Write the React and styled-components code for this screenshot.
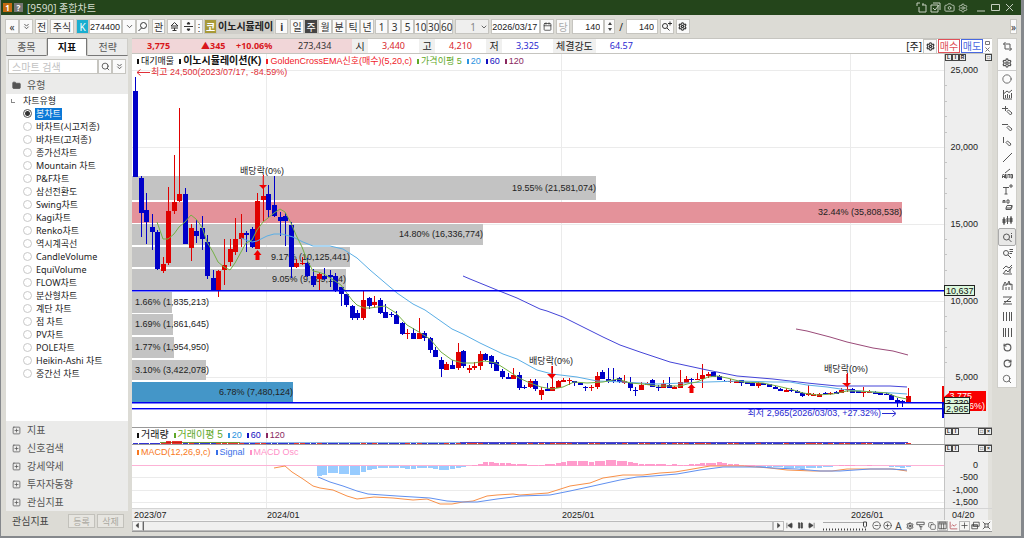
import { useState } from 'react';
import styled, { createGlobalStyle, css } from 'styled-components';
import {
  Settings, Search, Camera, ChevronDown, ChevronsDown, Calendar, Plus, RotateCcw, RotateCw,
  Repeat, Circle, CirclePlus, CircleMinus, FolderMinus, SquarePlus, Pause, SkipBack, SkipForward,
  Copy, ChartLine,
} from 'lucide-react';

const UI_FONT = "'Noto Sans', 'Noto Sans CJK KR', sans-serif";
const CHART_FONT = "'Liberation Sans', 'Noto Sans CJK KR', sans-serif";

const UP = '#e00000';
const DOWN = '#0000c8';

/* ---------- data ---------- */

// color, high, body top, body bottom, low
const CANDLES = [
  'd 77 91 177 177', 'd 176 178 213 237', 'd 193 210 222 244', 'd 214 227 232 250', 'd 230 232 269 270',
  'u 257 264 271 273', 'u 187 211 263 265', 'u 155 202 211 214', 'u 108 194 201 202', 'd 188 194 244 244',
  'u 224 228 248 261', 'd 220 231 236 243', 'd 216 228 239 250', 'd 235 242 276 279', 'd 270 278 290 291',
  'u 270 271 290 297', 'u 239 265 270 285', 'u 239 249 262 266', 'u 218 239 252 255', 'u 214 233 239 247',
  'd 231 233 235 252', 'd 227 229 247 248', 'u 193 201 249 249', 'u 175 196 200 221', 'd 185 194 210 218',
  'd 176 205 216 217', 'd 212 217 221 236', 'd 213 216 221 246', 'd 222 225 267 278', 'u 259 263 267 268',
  'u 257 263 264 265', 'd 258 263 276 277', 'd 269 276 285 287', 'u 272 274 279 290', 'd 268 276 279 280',
  'd 270 275 277 287', 'd 273 276 290 292', 'd 287 287 294 306', 'd 294 294 305 307', 'd 305 306 318 320',
  'd 310 313 318 320', 'u 290 300 318 320', 'd 297 298 306 309', 'u 296 302 305 308', 'd 298 300 313 314',
  'd 304 312 318 318', 'd 312 314 315 317', 'd 311 315 324 324', 'd 322 323 334 335', 'u 329 333 334 339',
  'd 328 333 339 339', 'u 318 333 339 339', 'd 331 333 338 341', 'd 337 338 350 353', 'd 347 350 357 357',
  'd 357 360 369 377', 'u 362 364 370 370', 'd 360 365 369 369', 'u 343 352 368 370', 'd 350 351 366 368',
  'u 365 368 370 373', 'u 362 366 368 370', 'u 351 354 366 370', 'd 353 354 360 361', 'd 355 356 364 368',
  'd 360 362 371 371', 'd 369 371 377 379', 'd 373 377 379 379', 'u 368 375 379 379', 'd 372 375 388 390',
  'd 385 387 388 389', 'u 379 381 387 388', 'd 379 381 389 391', 'u 387 390 395 400', 'd 383 389 391 391',
  'u 366 387 391 391', 'u 380 381 388 388', 'u 378 380 382 382', 'u 378 380 381 385', 'd 381 381 383 386',
  'd 382 383 385 385', 'd 386 387 388 391', 'u 385 387 388 391', 'u 372 376 387 389', 'd 370 372 379 379',
  'd 368 379 381 383', 'd 368 380 381 383', 'd 377 378 382 383', 'u 375 381 383 384', 'd 377 382 388 391',
  'd 387 390 391 396', 'u 382 385 390 390', 'u 382 383 385 385', 'd 379 380 387 387', 'd 385 387 388 391',
  'u 380 384 388 388', 'd 377 385 388 388', 'u 386 387 389 389', 'u 370 382 388 388', 'u 376 379 383 383',
  'd 378 379 380 385', 'u 373 379 380 380', 'u 364 375 379 388', 'u 372 374 376 378', 'd 372 372 377 377',
  'd 375 376 380 380', 'd 380 381 382 382', 'u 379 381 382 383', 'u 380 381 383 383', 'd 380 380 383 386',
  'd 382 382 384 384', 'd 382 383 386 386', 'u 382 383 386 388', 'd 383 383 385 385', 'd 384 384 387 387',
  'd 386 387 389 389', 'd 388 389 391 391', 'u 388 390 392 392', 'd 388 390 391 392', 'd 390 391 393 393',
  'd 392 393 396 397', 'u 385 393 395 396', 'u 393 394 396 396', 'u 393 394 397 397', 'd 392 393 394 394',
  'u 392 393 394 395', 'd 391 392 394 394', 'u 388 390 393 393', 'u 373 389 390 392', 'd 388 389 393 393',
  'd 391 391 393 393', 'u 387 392 393 397', 'u 390 392 393 393', 'd 391 392 394 394', 'd 393 393 395 395',
  'd 393 394 395 395', 'd 394 395 400 400', 'd 398 400 403 407', 'd 400 401 403 407', 'u 388 396 402 402',
].map((row) => {
  const [kind, high, top, bottom, low] = row.split(' ');
  return { color: kind === 'u' ? UP : DOWN, high: +high, top: +top, bottom: +bottom, low: +low };
});

const MA5 = '157,222 163,239 168,239 174,234 179,227 185,222 191,215 196,219 202,227 207,242 213,252 218,262 224,267 230,270 235,263 241,252 246,243 252,240 257,230 263,222 268,218 274,213 280,209 285,212 291,223 296,235 302,247 307,260 313,271 318,272 324,274 330,278 335,281 341,285 346,292 352,300 357,305 364,308 370,308 385,306 396,313 407,325 419,332 430,339 441,352 452,360 463,363 474,363 485,361 496,363 507,370 519,378 530,383 541,387 552,389 563,387 574,382 587,383 603,382 618,379 630,383 643,384 657,386 680,386 691,383 697,382 708,377 717,376 727,378 743,382 763,383 777,386 790,389 803,393 817,395 833,394 847,391 860,391 873,392 887,393 897,397 907,399';
const MA20 = '241,238 246,240 252,242 257,241 267,236 274,234 282,234 293,237 303,242 313,246 330,246 343,249 357,258 370,270 397,293 413,304 425,310 452,329 463,334 480,343 503,354 517,359 537,370 552,374 577,377 597,381 623,382 657,384 683,383 707,382 740,381 773,382 790,382 807,385 827,387 847,390 873,392 893,393 907,394';
const MA60 = '463,276 470,279 497,290 517,298 540,309 547,311 563,317 583,327 603,337 620,345 640,352 670,362 707,370 737,376 773,379 807,383 837,386 863,386 890,386 907,387';
const MA120 = '796,329 807,331 830,337 847,342 873,348 893,351 908,355';

const MACD = '274,468 285,466 292,472 303,479 313,486 320,488 333,490 347,496 357,499 374,497 393,498 413,500 427,499 440,504 452,504 463,502 473,501 487,496 497,495 513,494 520,495 548,493 570,486 590,483 603,478 623,475 643,475 660,473 675,472 687,470 710,466 743,466 770,468 787,470 813,471 832,471 847,469 877,469 893,469 907,471';
const SIGNAL = '318,477 330,482 343,486 357,491 368,494 397,496 430,498 447,501 463,502 477,502 497,499 513,497 520,496 550,495 570,491 593,486 620,480 637,477 653,476 677,474 700,470 723,467 760,467 773,468 797,469 820,471 840,471 870,469 890,469 907,470';

// oscillator bars from the 34th week on, in pixels over (+) or under (-) zero
const OSC = [
  -10, -9, -7, -7, -8, -8, -9, -9, -6, -4, -3, -2, -2, -2, -2, -2, -3, -3, -2, -2, -2, -3, -4, -4, -3, -2, -1, 0,
  1, 2, 4, 4, 3, 3, 3, 2, 2, 2, 1, 1, 1, 2, 2, 3, 4, 5, 5, 5, 5, 4, 5, 5, 6, 6, 5, 5, 4, 3, 2, 2, 2, 2, 2, 1, 2, 1,
  1, 2, 2, 3, 3, 3, 4, 3, 2, 2, 1, 1, 1, -1, -1, -1, -1, -1, -2, -2, -2, -3, -2, -2, -2, -1, -1, 0,
  1, 1, 1, 0, 0, 1, 0, 0, 0, -1, -1, -2, -1,
];

const PROFILE = [
  { end: 596, top: 176, height: 24, label: '19.55% (21,581,074)' },
  { end: 902, top: 202, height: 21, label: '32.44% (35,808,538)', color: '#e4929a' },
  { end: 483, top: 224, height: 21, label: '14.80% (16,336,774)' },
  { end: 350, top: 247, height: 20, label: '9.17% (10,125,441)' },
  { end: 346, top: 269, height: 21, label: '9.05% (9,989,104)' },
  { end: 172, top: 292, height: 21, label: '1.66% (1,835,213)' },
  { end: 173, top: 314, height: 21, label: '1.69% (1,861,645)' },
  { end: 174, top: 337, height: 21, label: '1.77% (1,954,950)' },
  { end: 206, top: 360, height: 20, label: '3.10% (3,422,078)' },
  { end: 293, top: 382, height: 20, label: '6.78% (7,480,124)', color: '#4496c8' },
];

const CHART_TYPES = [
  '봉차트', '바차트(시고저종)', '바차트(고저종)', '종가선차트', 'Mountain 차트', 'P&F차트', '삼선전환도',
  'Swing차트', 'Kagi차트', 'Renko차트', '역시계곡선', 'CandleVolume', 'EquiVolume', 'FLOW차트', '분산형차트',
  '계단 차트', '점 차트', 'PV차트', 'POLE차트', 'Heikin-Ashi 차트', '중간선 차트',
];
const GROUPS = ['지표', '신호검색', '강세약세', '투자자동향', '관심지표'];
const YEARS = [266, 561, 850];

const candleX = (i) => Math.round(135 + i * 5.561);

/* ---------- styles ---------- */

const GlobalStyle = createGlobalStyle`
  * { box-sizing: border-box; }
  body { margin: 0; background: #c9c8c2; }
  button, input, select { font: inherit; color: inherit; margin: 0; }
`;

const Window = styled.div`
  display: flex;
  flex-direction: column;
  min-height: 100vh;
  border: solid #85888c;
  border-width: 0 3px 2px 1px;
  background: #dcdbd5;
  font: 10px/12px ${UI_FONT};
  color: #222;
`;

const TitleBar = styled.header`
  display: flex;
  align-items: center;
  gap: 2px;
  height: 15px;
  padding: 0 6px 0 2px;
  background: #24451b;
  color: #d3dcce;
`;

const TitleBadge = styled.span`
  width: 9px;
  height: 9px;
  background: ${({ $bg }) => $bg};
  color: #fff;
  font-size: 8px;
  font-weight: 700;
  line-height: 9px;
  text-align: center;
`;

const Title = styled.h1`
  flex: 1;
  margin: 0 0 0 2px;
  font: 10px/14px ${UI_FONT};
`;

const TitleButton = styled.button`
  display: flex;
  padding: 0;
  border: 0;
  margin-left: ${({ $gap }) => ($gap ? '6px' : '1px')};
  background: none;
  color: #c5cfc0;
`;

const Toolbar = styled.div`
  display: flex;
  align-items: center;
  height: 23px;
  padding: 0 4px;
`;

const ToolGroup = styled.div`
  display: flex;
  margin-right: ${({ $gap = 2 }) => $gap}px;
  ${({ $end }) => $end && css`
    margin-left: auto;
    margin-right: 0;
  `}
`;

const ToolButton = styled.button`
  display: flex;
  align-items: center;
  justify-content: center;
  width: ${({ $w = 14 }) => $w}px;
  height: 15px;
  padding: 0;
  border: 1px solid #c6c5c0;
  background: ${({ $bg }) => $bg || '#fafafa'};
  color: ${({ $fg }) => $fg || '#333'};
  font-weight: ${({ $bold }) => ($bold ? 700 : 400)};
  line-height: 12px;
  white-space: nowrap;
  & + & { border-left-width: ${({ $joined }) => ($joined ? 0 : 1)}px; }
`;

const ToolInput = styled.input`
  width: ${({ $w }) => $w}px;
  height: 15px;
  padding: ${({ $right }) => ($right ? '0 3px' : '0')};
  border: 1px solid #c6c5c0;
  background: #fff;
  font: 9px ${CHART_FONT};
  text-align: ${({ $right }) => ($right ? 'right' : 'left')};
`;

const UnitSelect = styled.select`
  width: 34px;
  height: 15px;
  padding: 0 0 0 14px;
  border: 1px solid #c6c5c0;
  background: #efefee;
  color: #888;
  appearance: none;
`;

const SelectWrap = styled.div`
  position: relative;
  margin-right: 2px;
  svg {
    position: absolute;
    right: 1px;
    top: 4px;
    pointer-events: none;
  }
`;

const StockName = styled.strong`
  min-width: 56px;
  height: 15px;
  padding: 0 1px;
  background: #cfcec9;
  font: 700 10px/15px ${UI_FONT};
  white-space: nowrap;
`;

const Spinner = styled.span`
  display: flex;
  flex-direction: column;
  justify-content: center;
  gap: 3px;
  align-items: center;
  width: 11px;
  height: 15px;
  border: 1px solid #c6c5c0;
  background: #fafafa;
`;

const Arrow = styled.i`
  border: 2px solid transparent;
  ${({ $up }) => ($up
    ? css`border-top-width: 0; border-bottom: 3px solid #444;`
    : css`border-bottom-width: 0; border-top: 3px solid #444;`)}
`;

const Body = styled.main`
  display: flex;
  flex: 1;
  align-items: stretch;
  padding: 0 4px 0 5px;
`;

/* left side */

const Sidebar = styled.aside`
  display: flex;
  flex-direction: column;
  width: 122px;
  margin: 0 4px 5px 0;
  background: #ebebea;
  font-size: 9px;
`;

const Tabs = styled.div`
  display: flex;
  height: 18px;
`;

const Tab = styled.button`
  flex: 1;
  padding: 0;
  border: 1px solid ${({ $on }) => ($on ? '#777' : '#cfcec9')};
  border-bottom-color: ${({ $on }) => ($on ? '#fff' : '#777')};
  background: ${({ $on }) => ($on ? '#fff' : '#ebebea')};
  color: ${({ $on }) => ($on ? '#111' : '#555')};
  font-size: 10px;
  font-weight: ${({ $on }) => ($on ? 700 : 400)};
`;

const SearchRow = styled.div`
  display: flex;
  padding: 3px 2px 2px;
`;

const SearchInput = styled.input`
  flex: 1;
  min-width: 0;
  height: 15px;
  padding: 0 3px;
  border: 1px solid #c6c5c0;
  background: #fff;
  font-size: 10px;
  &::placeholder { color: #c2c2c2; }
`;

const GroupRow = styled.button`
  display: flex;
  align-items: center;
  gap: 6px;
  height: ${({ $h = 18 }) => $h}px;
  padding: 0 6px;
  border: 0;
  background: none;
  color: #555;
  font-size: 10px;
  text-align: left;
`;

const Tree = styled.fieldset`
  flex: 1;
  min-width: 0;
  margin: 0;
  padding: 0;
  border: 0;
  background: #fff;
`;

const TreeRoot = styled.legend`
  display: flex;
  align-items: center;
  gap: 8px;
  height: 13px;
  padding: 0 5px;
  float: left;
  width: 100%;
  i {
    width: 4px;
    height: 4px;
    border: solid #888;
    border-width: 0 0 1px 1px;
  }
`;

const TreeItem = styled.label`
  display: flex;
  align-items: center;
  gap: 3px;
  clear: both;
  height: 13px;
  padding-left: 17px;
  input {
    appearance: none;
    width: 9px;
    height: 9px;
    border: 1px solid #c8c8c8;
    border-radius: 50%;
    background: #fff;
  }
  input:checked {
    border-color: #555;
    background: radial-gradient(circle, #333 0 2px, #fff 3px);
  }
  span { padding: 0 1px; }
  input:checked + span {
    background: #0a78d7;
    color: #fff;
  }
`;

const SideFoot = styled.div`
  display: flex;
  align-items: center;
  gap: 2px;
  height: 20px;
  padding: 0 4px 0 6px;
  background: #dcdbd5;
  color: #444;
  font-size: 10px;
  span { flex: 1; }
`;

const FootButton = styled.button`
  width: 27px;
  height: 14px;
  padding: 0;
  border: 1px solid #c2c1bb;
  background: #e6e5e0;
  color: #aaa89f;
  font-size: 9px;
  line-height: 11px;
`;

/* chart side */

const ChartSide = styled.section`
  display: flex;
  flex-direction: column;
  flex: 1;
  min-width: 0;
`;

const QuoteBar = styled.div`
  display: flex;
  align-items: stretch;
  height: 16px;
  padding-right: 1px;
  border: solid #c6c5c0;
  border-width: 1px 0;
  background: #fff;
  font: 10px/14px ${UI_FONT};
`;

const QuoteMain = styled.div`
  display: grid;
  grid-template-columns: 54px 35px 62px auto;
  width: 220px;
  padding-left: 15px;
  background: #f1d6d8;
  color: #d8161c;
  font-size: 9px;
  font-weight: 700;
  span:last-child {
    color: #333;
    font-weight: 400;
  }
`;

const QuoteLabel = styled.span`
  min-width: 16px;
  padding: 0 3px;
  background: #f0f0ef;
  text-align: center;
  white-space: nowrap;
`;

const QuoteValue = styled.span`
  width: 51px;
  padding-right: 14px;
  color: ${({ $color }) => $color};
  font-size: 9px;
  text-align: right;
`;

const QuoteTools = styled.div`
  display: flex;
  align-items: center;
  gap: 1px;
  margin-left: auto;
`;

const OrderButton = styled.button`
  width: 22px;
  height: 14px;
  padding: 0;
  border: 1px solid ${({ $c }) => $c};
  background: #fff;
  color: ${({ $c }) => $c};
  line-height: 11px;
`;

const Pane = styled.div`
  position: relative;
  border-top: ${({ $line }) => ($line ? '1px solid #999' : '0')};
  background: #fff;
  svg.plot {
    display: block;
    width: 100%;
    height: auto;
    font: 9px ${CHART_FONT};
  }
`;

const Legend = styled.div`
  position: absolute;
  top: 1px;
  left: 5px;
  display: flex;
  gap: 5px;
  font: 9px/12px ${CHART_FONT};
  white-space: nowrap;
`;

const LegendItem = styled.span`
  display: flex;
  align-items: center;
  gap: 2px;
  color: ${({ $color }) => $color};
  font-size: ${({ $large }) => ($large ? 10 : 9)}px;
  font-weight: ${({ $bold }) => ($bold ? 700 : 400)};
  &::before {
    content: '';
    width: 2px;
    height: 5px;
    background: ${({ $color }) => $color};
  }
`;

const PaneButtons = styled.div`
  position: absolute;
  top: 0;
  right: 0;
  display: flex;
  justify-content: space-between;
  width: 47px;
  div { display: flex; }
`;

const PaneButton = styled.button`
  display: flex;
  align-items: center;
  justify-content: center;
  width: 7px;
  height: 7px;
  padding: 0;
  border: 1px solid #444;
  background: #eee;
  font: 700 5px/5px ${CHART_FONT};
`;

const ScrollRow = styled.div`
  display: flex;
  align-items: center;
  height: 12px;
  background: #f6f6f5;
  border-bottom: 1px solid #999;
`;

const ScrollTrack = styled.div`
  flex: 1;
  height: 10px;
  border: 1px solid #bbb;
  border-left-color: #666;
  background: #f0f0ef;
`;

const SmallButton = styled.button`
  display: flex;
  align-items: center;
  justify-content: center;
  width: 11px;
  height: 10px;
  padding: 0;
  border: ${({ $boxed }) => ($boxed ? '1px solid #bbb' : '0')};
  background: none;
  color: #444;
`;

const Zoomer = styled.div`
  width: 46px;
  margin: 0 3px 0 5px;
  svg { display: block; }
`;

const ToolRail = styled.nav`
  display: flex;
  flex-direction: column;
  align-self: flex-start;
  width: 20px;
  height: 350px;
  margin-left: 5px;
  border: 1px solid #cfcec9;
  background: #fbfbfb;
`;

const RailButton = styled.button`
  display: flex;
  flex: 1;
  align-items: center;
  justify-content: center;
  min-height: 0;
  padding: 0;
  border: ${({ $on }) => ($on ? '1px solid #aaa' : '0')};
  border-radius: ${({ $on }) => ($on ? 2 : 0)}px;
  ${({ $split }) => $split && css`border-bottom: 1px solid #ccc;`}
  background: ${({ $on }) => ($on ? '#e8e8e7' : 'none')};
  color: #555;
`;

/* ---------- pieces ---------- */

function Glyph({ d, size = 11, fill = 'none', children }) {
  return (
    <svg width={size} height={size} viewBox="0 0 11 11" fill={fill} stroke="currentColor" strokeWidth="1">
      {d && <path d={d} />}
      {children}
    </svg>
  );
}

const RAIL = [
  { name: '새로고침', icon: <Glyph d="M3.500 1L1.500 3l2 2M1.500 3H8v3M7.500 10l2-2-2-2M9.500 8H3V5" /> },
  { name: '설정', icon: <Settings size={10} strokeWidth={3} />, split: true },
  { name: '원', icon: <Circle size={10} strokeWidth={2} /> },
  { name: '지표', icon: <Glyph d="M1.500 1v9H10M3.500 9V6M5.500 9V5M7.500 9V6M9.500 9V4M2 4.500l3-2.500 2 1.500L10 1" /> },
  { name: '십자 지우개', icon: <Glyph d="M0 3.500h6M3.500 1v5M5 6.500l1.500-1.500 3.500 3-1.500 2z" /> },
  { name: '수평 지우개', icon: <Glyph d="M0 3.500h6M5 6.500l1.500-1.500 3.500 3-1.500 2z" /> },
  { name: '수직 지우개', icon: <Glyph d="M1.500 1v6M4 6.500l1.500-1.500 3.500 3-1.500 2z" /> },
  { name: '추세선', icon: <Glyph d="M1 10L10 1" /> },
  { name: '자동 추세선', icon: <Glyph d="M3 5l5-4M.5 10V7.500L1.500 6l1 1.500V10M.5 8.500h2M3.500 6v4h1.500V6M6 6.500h2.500M7.200 6.500V10M9 6.500h1.500V10H9z" /> },
  { name: '텍스트', icon: <Glyph d="M1 3.500h6M4 3.500V10M2.500 10h3M7 2h4M9 0v4" /> },
  { name: '도형 문자', icon: <Glyph d="M1 4V1.500h2V4M1 3h2M5 1v3h2V1zM4 9l1-2.500h5L9 9zM4 9v1.500h5L10 8V6.500" /> },
  {
    name: '캔들',
    icon: (
      <Glyph d="M2 2v8M5.500 1v8M9 1v8">
        <path d="M1 4h2v4H1zM5 3h1v4H5zM8 3h2v4H8z" fill="currentColor" />
      </Glyph>
    ),
  },
  { name: '정보 돋보기', icon: <Glyph d="M6.500 7l3 3M9.500 1v1M9.500 3v3"><circle cx="4.500" cy="5" r="3" /></Glyph>, on: true },
  { name: '목록 돋보기', icon: <Glyph d="M6 7l3 3M7.500 1.500H11M7.500 3.500H11M7.500 5.500H10"><circle cx="4" cy="5" r="2.500" /></Glyph> },
  { name: '패턴', icon: <Glyph d="M1 10L4 6l2 2 4-5M1 5l3-3 3 2 3-3M2 10h8M8 5v4" /> },
  { name: '파동', icon: <Glyph d="M1 10V6l2-4 2 3 2-4 1 4 2-1v6M2 5h3M6 4h3M4 10V7M7 10V7" /> },
  { name: '분할', icon: <Glyph d="M1 2h9M1 9h9M2 6.500h7M9 2.500L2 8.500" /> },
  { name: '세로 격자 1', icon: <Glyph d="M1.500 1v9M4.500 1v9M7.500 1v9M9.500 1v9" /> },
  { name: '세로 격자 2', icon: <Glyph d="M1.500 1v9M3.500 1v9M6.500 1v9M9.500 1v9" /> },
  { name: '되돌리기', icon: <RotateCcw size={9} strokeWidth={3} /> },
  { name: '다시하기', icon: <RotateCw size={9} strokeWidth={3} /> },
  { name: '확대', icon: <Search size={10} strokeWidth={2} /> },
];

function PriceTag({ x, y, width, children }) {
  return (
    <g>
      <rect x={x + 0.5} y={y + 0.5} width={width} height="10" fill="#dcf8dc" stroke="#222" />
      <text x={x + 2} y={y + 9} fill="#111">{children}</text>
    </g>
  );
}

function PricePlot() {
  return (
    <svg className="plot" viewBox="132 54 860 373" role="img" aria-label="이노시뮬레이션 주봉">
      <rect x="944" y="54" width="44" height="373" fill="#eeeeee" />
      <rect x="988" y="54" width="4" height="373" fill="#e2e1dc" />
      <g shapeRendering="crispEdges">
        {[70, 147, 224, 301, 377].map((y) => <rect key={y} x="132" y={y} width="815" height="1" fill="#ebebeb" />)}
        {YEARS.map((x) => <rect key={x} x={x} y="54" width="1" height="373" fill="#ebebeb" />)}
        <rect x="944" y="54" width="1" height="373" fill="#c4c4c4" />
        {[85, 101, 116, 132, 162, 178, 193, 208, 239, 254, 270, 285, 316, 331, 347, 362].map((y) => (
          <rect key={y} x="945" y={y} width="2" height="1" fill="#c4c4c4" />
        ))}
        {PROFILE.map((bar) => (
          <rect key={bar.top} x="132" y={bar.top} width={bar.end - 132} height={bar.height} fill={bar.color || '#c3c3c3'} />
        ))}
      </g>
      {PROFILE.map((bar) => (
        <text
          key={bar.top}
          x={bar.end < 215 ? 135 : bar.end}
          y={bar.top + Math.floor(bar.height / 2) + 3}
          textAnchor={bar.end < 215 ? 'start' : 'end'}
          fill="#222"
        >
          {bar.label}
        </text>
      ))}
      <g shapeRendering="crispEdges">
        {CANDLES.map((c, i) => (
          <g key={i} fill={c.color}>
            <rect x={candleX(i)} y={c.high} width="1" height={c.low - c.high} />
            <rect x={candleX(i) - 2} y={c.top} width="5" height={Math.max(1, c.bottom - c.top)} />
          </g>
        ))}
      </g>
      <g fill="none" strokeWidth="1">
        <polyline points={MA120} stroke="#9a4a78" />
        <polyline points={MA60} stroke="#4444d8" />
        <polyline points={MA20} stroke="#5aaee6" />
        <polyline points={MA5} stroke="#74b044" />
      </g>
      <g fill="#0000f0" shapeRendering="crispEdges">
        <rect x="132" y="290" width="812" height="1" />
        <rect x="132" y="291" width="812" height="1" opacity="0.5" />
        <rect x="132" y="402" width="812" height="1" />
        <rect x="132" y="403" width="812" height="1" opacity="0.5" />
        <rect x="132" y="408" width="812" height="1" />
        <rect x="132" y="409" width="812" height="1" opacity="0.4" />
      </g>
      <g fill="#f00000">
        <path d="M259 185h8l-4 4zM547 374h9l-4 5zM842 383h9l-4 4z" />
        <path d="M263 176v9M551.500 366v8M846.500 374v9" stroke="#e85050" />
        <path d="M257.500 250l4 5h-2v5h-4v-5h-2zM691.500 384l4 4h-2v5h-4v-5h-2z" />
      </g>
      <g fill="#222" textAnchor="middle">
        <text x="262" y="174">배당락(0%)</text>
        <text x="551" y="364">배당락(0%)</text>
        <text x="846" y="372">배당락(0%)</text>
      </g>
      <g fill="#e03038">
        <path d="M137 72.500h13M140.500 69.500l-3.500 3 3.500 3" fill="none" stroke="#e03038" />
        <text x="151" y="75">최고 24,500(2023/07/17, -84.59%)</text>
      </g>
      <g fill="#2828d0">
        <text x="881" y="416" textAnchor="end">최저 2,965(2026/03/03, +27.32%)</text>
        <path d="M882 413.500h13M892.500 410.500l3.500 3-3.500 3" fill="none" stroke="#2828d0" />
      </g>
      <g fill="#222" textAnchor="end">
        <text x="978" y="73">25,000</text>
        <text x="978" y="150">20,000</text>
        <text x="978" y="227">15,000</text>
        <text x="978" y="304">10,000</text>
        <text x="978" y="380">5,000</text>
      </g>
      <g shapeRendering="crispEdges">
        <rect x="942" y="386" width="2" height="17" fill="#f00000" />
        <rect x="949" y="391" width="37" height="20" fill="#f80000" />
        <rect x="942" y="402" width="2" height="16" fill="#0000d0" />
      </g>
      <path d="M944 397l6-5v9z" fill="#f80000" />
      <text x="972" y="399" fill="#fff" textAnchor="end">3,775</text>
      <text x="985" y="409" fill="#fff" textAnchor="end">(+10.06%)</text>
      <PriceTag x={944} y={285} width={30}>10,637</PriceTag>
      <PriceTag x={944} y={397} width={25}>3,330</PriceTag>
      <PriceTag x={944} y={403} width={25}>2,965</PriceTag>
    </svg>
  );
}

function VolumePlot() {
  return (
    <svg className="plot" viewBox="132 428 860 16" role="img" aria-label="거래량">
      <rect x="944" y="428" width="44" height="16" fill="#eeeeee" />
      <rect x="988" y="428" width="4" height="16" fill="#e2e1dc" />
      <g shapeRendering="crispEdges">
        {YEARS.map((x) => <rect key={x} x={x} y="428" width="1" height="16" fill="#ebebeb" />)}
        <rect x="944" y="428" width="1" height="16" fill="#c4c4c4" />
        <rect x="160" y="442" width="80" height="1" fill="#6d9a38" />
        <rect x="240" y="442" width="220" height="1" fill="#8ab4e0" />
        <rect x="460" y="442" width="448" height="1" fill="#4848c8" />
        {CANDLES.map((c, i) => {
          const h = [6, 7, 8].includes(i) ? 3 : 1;
          return <rect key={i} x={candleX(i) - 2} y={444 - h} width="5" height={h} fill={c.color} opacity="0.8" />;
        })}
      </g>
    </svg>
  );
}

function MacdPlot() {
  return (
    <svg className="plot" viewBox="132 445 860 75" role="img" aria-label="MACD">
      <rect x="944" y="445" width="44" height="75" fill="#eeeeee" />
      <rect x="132" y="508" width="856" height="12" fill="#eeeeee" />
      <rect x="988" y="445" width="4" height="75" fill="#e2e1dc" />
      <g shapeRendering="crispEdges">
        {[477, 490, 502].map((y) => <rect key={y} x="132" y={y} width="815" height="1" fill="#ebebeb" />)}
        {YEARS.map((x) => <rect key={x} x={x} y="445" width="1" height="63" fill="#ebebeb" />)}
        <rect x="132" y="508" width="860" height="1" fill="#d4d4d4" />
        <rect x="944" y="445" width="1" height="75" fill="#c4c4c4" />
        <rect x="132" y="465" width="812" height="1" fill="#fdb2d6" />
        {OSC.map((v, i) => (
          <rect
            key={i}
            x={candleX(i + 33) - 2}
            y={v > 0 ? 466 - v : 466}
            width="5"
            height={Math.abs(v)}
            fill={v > 0 ? '#ff9ccc' : '#98ccff'}
          />
        ))}
      </g>
      <g fill="none" strokeWidth="1">
        <polyline points={MACD} stroke="#f89048" />
        <polyline points={SIGNAL} stroke="#6090f0" />
      </g>
      <g fill="#222" textAnchor="end">
        <text x="978" y="468">0</text>
        <text x="978" y="480">-500</text>
        <text x="978" y="493">-1,000</text>
        <text x="978" y="505">-1,500</text>
      </g>
      <g fill="#222">
        <text x="134" y="518">2023/07</text>
        <text x="267" y="518">2024/01</text>
        <text x="562" y="518">2025/01</text>
        <text x="851" y="518">2026/01</text>
        <text x="952" y="518">04/20</text>
      </g>
    </svg>
  );
}

function CornerButtons({ left, right }) {
  return (
    <PaneButtons>
      <div>{left.map((t) => <PaneButton key={t}>{t}</PaneButton>)}</div>
      <div>{right.map((t) => <PaneButton key={t}>{t}</PaneButton>)}</div>
    </PaneButtons>
  );
}

export default function App() {
  const [chartType, setChartType] = useState('봉차트');
  const [period, setPeriod] = useState('주');
  const [tab, setTab] = useState('지표');

  return (
    <Window>
      <GlobalStyle />
      <TitleBar>
        <TitleBadge $bg="#c46a10">1</TitleBadge>
        <TitleBadge $bg="#777">?</TitleBadge>
        <Title>[9590] 종합차트</Title>
        <TitleButton aria-label="창 고정"><Glyph d="M1 1h3M1 1v3M3 5v5h7V3H6M7 3V1" /></TitleButton>
        <TitleButton aria-label="복사"><Glyph d="M3 1h7v7M1 3h7v7H1zM3 6l2 2 4-5" /></TitleButton>
        <TitleButton aria-label="화면 캡처"><Camera size={11} /></TitleButton>
        <TitleButton aria-label="설정"><Settings size={10} /></TitleButton>
        <TitleButton $gap aria-label="최소화"><Glyph d="M1 9h8" /></TitleButton>
        <TitleButton aria-label="최대화"><Glyph d="M1.500 2.500h8v6h-8z" /></TitleButton>
        <TitleButton aria-label="닫기"><Glyph d="M2 2l7 7M9 2l-7 7" /></TitleButton>
      </TitleBar>

      <Toolbar>
        <ToolGroup $gap={2}>
          <ToolButton>«</ToolButton>
          <ToolButton aria-label="펼치기"><ChevronsDown size={9} /></ToolButton>
        </ToolGroup>
        <ToolGroup><ToolButton $w={13}>전</ToolButton></ToolGroup>
        <ToolGroup><ToolButton $w={24}>주식</ToolButton></ToolGroup>
        <ToolGroup $gap={0}>
          <ToolButton $w={13} $bg="#18aed0" $fg="#fff">K</ToolButton>
          <ToolInput $w={33} aria-label="종목코드" defaultValue="274400" />
          <ToolButton aria-label="종목 목록"><ChevronDown size={9} /></ToolButton>
        </ToolGroup>
        <ToolGroup $gap={3}>
          <ToolButton $w={13} aria-label="종목 찾기">
            <Glyph d="M4.500 7L1.500 10"><circle cx="6.500" cy="4.500" r="3" /></Glyph>
          </ToolButton>
        </ToolGroup>
        <ToolGroup><ToolButton $w={13}>관</ToolButton></ToolGroup>
        <ToolGroup $gap={1}>
          <ToolButton aria-label="종목 이동"><Glyph d="M2 5l3.500-3.500L9 5zM2 7h7M3.500 9.500h4M5.500 7v3" /></ToolButton>
          <ToolButton aria-label="위아래"><Glyph fill="currentColor" d="M4 3l1.500-2L7 3zM1 5.500h9M4 8l1.500 2L7 8z" /></ToolButton>
          <ToolButton $w={8}>⋮</ToolButton>
        </ToolGroup>
        <ToolGroup $gap={1}>
          <ToolButton $w={13} $bg="#a89a38" $fg="#fff" $bold>코</ToolButton>
          <StockName>이노시뮬레이</StockName>
        </ToolGroup>
        <ToolGroup $gap={2}><ToolButton $w={13} $bold>i</ToolButton></ToolGroup>
        <ToolGroup $gap={1}>
          {['일', '주', '월', '분', '틱', '년'].map((p) => (
            <ToolButton
              key={p}
              $joined
              $bg={p === period && '#444'}
              $fg={p === period && '#fff'}
              onClick={() => setPeriod(p)}
            >
              {p}
            </ToolButton>
          ))}
        </ToolGroup>
        <ToolGroup>
          {['1', '3', '5', '10', '30', '60'].map((m) => <ToolButton key={m} $joined $w={13}>{m}</ToolButton>)}
        </ToolGroup>
        <SelectWrap>
          <UnitSelect aria-label="주기"><option>1</option></UnitSelect>
          <ChevronDown size={8} />
        </SelectWrap>
        <ToolGroup>
          <ToolInput $w={49} aria-label="기준일" defaultValue="2026/03/17" />
          <ToolButton aria-label="달력"><Calendar size={9} /></ToolButton>
        </ToolGroup>
        <ToolGroup><ToolButton $fg="#aaa">당</ToolButton></ToolGroup>
        <ToolGroup $gap={4}>
          <ToolInput $w={32} $right aria-label="표시 봉 수" defaultValue="140" />
          <Spinner><Arrow $up /><Arrow /></Spinner>
        </ToolGroup>
        <ToolGroup $gap={3}>/</ToolGroup>
        <ToolGroup><ToolInput $w={32} $right aria-label="전체 봉 수" defaultValue="140" /></ToolGroup>
        <ToolGroup>
          <ToolButton aria-label="구간 확대">
            <Glyph d="M6 7l2.500 2.500M7 2.500h4M9 .5v4"><circle cx="4" cy="5" r="2.500" /></Glyph>
          </ToolButton>
        </ToolGroup>
        <ToolButton aria-label="차트 설정"><Settings size={9} strokeWidth={3} /></ToolButton>
        <ToolGroup $end><ToolButton $w={7}>»</ToolButton></ToolGroup>
      </Toolbar>

      <Body>
        <Sidebar>
          <Tabs>
            {['종목', '지표', '전략'].map((t) => (
              <Tab key={t} $on={t === tab} onClick={() => setTab(t)}>{t}</Tab>
            ))}
          </Tabs>
          <SearchRow>
            <SearchInput aria-label="스마트 검색" placeholder="스마트 검색" />
            <ToolButton aria-label="검색"><Search size={9} /></ToolButton>
            <ToolButton aria-label="모두 펼치기"><ChevronsDown size={9} /></ToolButton>
          </SearchRow>
          <GroupRow $h={18}><FolderMinus size={9} fill="#555" />유형</GroupRow>
          <Tree>
            <TreeRoot><i />차트유형</TreeRoot>
            {CHART_TYPES.map((name) => (
              <TreeItem key={name}>
                <input type="radio" name="chartType" checked={name === chartType} onChange={() => setChartType(name)} />
                <span>{name}</span>
              </TreeItem>
            ))}
          </Tree>
          {GROUPS.map((g) => <GroupRow key={g}><SquarePlus size={9} />{g}</GroupRow>)}
          <SideFoot>
            <span>관심지표</span>
            <FootButton disabled>등록</FootButton>
            <FootButton disabled>삭제</FootButton>
          </SideFoot>
        </Sidebar>

        <ChartSide>
          <QuoteBar>
            <QuoteMain>
              <span>3,775</span>
              <span>▲345</span>
              <span>+10.06%</span>
              <span>273,434</span>
            </QuoteMain>
            <QuoteLabel>시</QuoteLabel><QuoteValue $color="#d8262c">3,440</QuoteValue>
            <QuoteLabel>고</QuoteLabel><QuoteValue $color="#d8262c">4,210</QuoteValue>
            <QuoteLabel>저</QuoteLabel><QuoteValue $color="#2828d0">3,325</QuoteValue>
            <QuoteLabel>체결강도</QuoteLabel><QuoteValue $color="#2828d0">64.57</QuoteValue>
            <QuoteTools>
              <span>[주]</span>
              <ToolButton aria-label="설정"><Settings size={9} strokeWidth={3} /></ToolButton>
              <OrderButton $c="#e05058">매수</OrderButton>
              <OrderButton $c="#4868e0">매도</OrderButton>
              <svg width="7" height="14" viewBox="0 0 7 14" fill="none" stroke="#777">
                <path d="M1.500 2.500h4v3h-4zM1.500 8.500l4 4M5.500 8.500l-4 4" />
              </svg>
            </QuoteTools>
          </QuoteBar>

          <Pane>
            <PricePlot />
            <Legend>
              <LegendItem $color="#111">대기매물</LegendItem>
              <LegendItem $color="#111" $bold $large>이노시뮬레이션(K)</LegendItem>
              <LegendItem $color="#f02028">GoldenCrossEMA신호(매수)(5,20,c)</LegendItem>
              <LegendItem $color="#5fa828">가격이평 5</LegendItem>
              <LegendItem $color="#2a94e0">20</LegendItem>
              <LegendItem $color="#1010c0">60</LegendItem>
              <LegendItem $color="#8a2860">120</LegendItem>
            </Legend>
            <CornerButtons left={['L', 'I', 'R']} right={['□']} />
          </Pane>
          <Pane $line>
            <VolumePlot />
            <Legend>
              <LegendItem $color="#111" $large>거래량</LegendItem>
              <LegendItem $color="#5fa828" $large>거래이평 5</LegendItem>
              <LegendItem $color="#2a94e0">20</LegendItem>
              <LegendItem $color="#1010c0">60</LegendItem>
              <LegendItem $color="#8a2860">120</LegendItem>
            </Legend>
            <CornerButtons left={['L', 'I']} right={['□', '×']} />
          </Pane>
          <Pane $line>
            <MacdPlot />
            <Legend>
              <LegendItem $color="#f87820">MACD(12,26,9,c)</LegendItem>
              <LegendItem $color="#3870e8">Signal</LegendItem>
              <LegendItem $color="#ff90c8">MACD Osc</LegendItem>
            </Legend>
            <CornerButtons left={['L', 'I']} right={['□', '×']} />
          </Pane>

          <ScrollRow>
            <SmallButton $boxed aria-label="왼쪽"><Glyph size={7} fill="currentColor" d="M7 2L3 5.500 7 9z" /></SmallButton>
            <ScrollTrack />
            <SmallButton $boxed aria-label="오른쪽"><Glyph size={7} fill="currentColor" d="M4 2l4 3.500L4 9z" /></SmallButton>
            <SmallButton aria-label="처음"><SkipBack size={7} fill="#444" /></SmallButton>
            <SmallButton aria-label="멈춤"><Pause size={7} fill="#444" /></SmallButton>
            <SmallButton aria-label="마지막"><SkipForward size={7} fill="#444" /></SmallButton>
            <Zoomer>
              <svg width="46" height="10" viewBox="0 0 46 10" stroke="#444" fill="none">
                <path d="M1 1.500h41" stroke="#aaa" />
                <path d="M1 8.500h44" strokeDasharray="1 2" strokeWidth="2" />
                <path d="M41.500 1v4l1.500 1.500 1.500-1.500V1z" />
              </svg>
            </Zoomer>
            <SmallButton aria-label="축소"><CircleMinus size={9} /></SmallButton>
            <SmallButton aria-label="확대"><CirclePlus size={9} /></SmallButton>
            <SmallButton>A</SmallButton>
            <SmallButton aria-label="설정"><Settings size={8} strokeWidth={3} /></SmallButton>
            <SmallButton aria-label="필터"><Glyph size={9} d="M1 1.500h9v3H1zM4 5l2 2v4M8 7H4" /></SmallButton>
            <SmallButton aria-label="지표 복사"><Copy size={8} /></SmallButton>
            <SmallButton aria-label="표" $boxed><Glyph size={9} d="M1 1.500h9v8H1zM1 3.500h9M4 3v7M7 3v7" /></SmallButton>
            <SmallButton aria-label="차트"><ChartLine size={9} color="#b04048" /></SmallButton>
            <SmallButton aria-label="십자선" $boxed><Plus size={9} /></SmallButton>
            <SmallButton aria-label="창 복제"><Glyph size={9} d="M3 1.500h7v5H3zM1 4.500h7v5H1zM1 6h7" /></SmallButton>
            <SmallButton aria-label="전체 화면"><Glyph size={9} d="M1 1l3 3M10 1L7 4M1 10l3-3M10 10L7 7M3.500 3.500h4v4h-4z" /></SmallButton>
          </ScrollRow>
        </ChartSide>

        <ToolRail>
          {RAIL.map((t) => (
            <RailButton key={t.name} aria-label={t.name} $on={t.on} $split={t.split}>{t.icon}</RailButton>
          ))}
        </ToolRail>
      </Body>
    </Window>
  );
}
